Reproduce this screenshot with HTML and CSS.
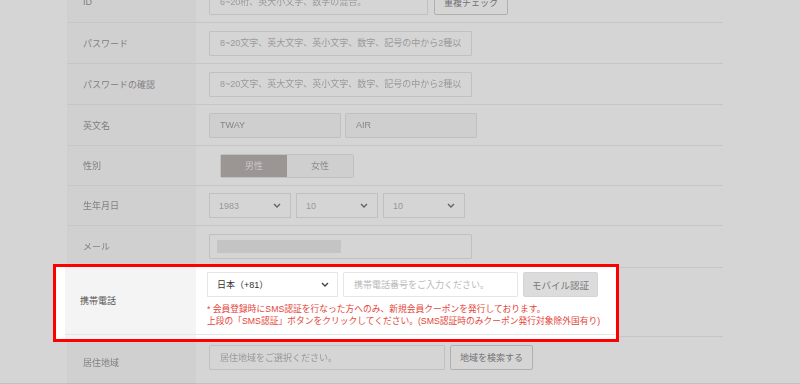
FILE: index.html
```html
<!DOCTYPE html>
<html lang="ja">
<head>
<meta charset="utf-8">
<title>会員登録</title>
<link rel="stylesheet" href="styles.css">
</head>
<body>
<div class="page">
  <div class="form">
    <div class="row">
      <div class="label">ID</div>
      <div class="field">
        <input class="text w-id" placeholder="6~20桁、英大小文字、数字の混合。">
        <button class="btn w-check">重複チェック</button>
      </div>
    </div>
    <div class="row">
      <div class="label">パスワード</div>
      <div class="field">
        <input class="text w-long" type="password" placeholder="8~20文字、英大文字、英小文字、数字、記号の中から2種以上">
      </div>
    </div>
    <div class="row">
      <div class="label">パスワードの確認</div>
      <div class="field">
        <input class="text w-long" type="password" placeholder="8~20文字、英大文字、英小文字、数字、記号の中から2種以上">
      </div>
    </div>
    <div class="row">
      <div class="label">英文名</div>
      <div class="field gap4">
        <input class="text filled w-name" value="TWAY" readonly>
        <input class="text filled w-name" value="AIR" readonly>
      </div>
    </div>
    <div class="row short">
      <div class="label">性別</div>
      <div class="field">
        <div class="toggle">
          <span class="on">男性</span>
          <span>女性</span>
        </div>
      </div>
    </div>
    <div class="row short">
      <div class="label">生年月日</div>
      <div class="field">
        <div class="select w-date"><span>1983</span><svg width="8" height="5" viewBox="0 0 8 5"><polyline points="1,1 4,4 7,1" fill="none" stroke="#777" stroke-width="1.4"/></svg></div>
        <div class="select w-date"><span>10</span><svg width="8" height="5" viewBox="0 0 8 5"><polyline points="1,1 4,4 7,1" fill="none" stroke="#777" stroke-width="1.4"/></svg></div>
        <div class="select w-date"><span>10</span><svg width="8" height="5" viewBox="0 0 8 5"><polyline points="1,1 4,4 7,1" fill="none" stroke="#777" stroke-width="1.4"/></svg></div>
      </div>
    </div>
    <div class="row mail">
      <div class="label">メール</div>
      <div class="field">
        <div class="text w-long masked"><span class="mask"></span></div>
      </div>
    </div>
    <!-- covered by the spotlight -->
    <div class="row phone">
      <div class="label"></div>
      <div class="field"></div>
    </div>
    <div class="row area">
      <div class="label">居住地域</div>
      <div class="field">
        <input class="text w-area" placeholder="居住地域をご選択ください。" readonly>
        <button class="btn w-search">地域を検索する</button>
      </div>
    </div>
  </div>

  <div class="dim"></div>

  <!-- highlighted row, lifted above the dim layer -->
  <div class="spotlight">
    <div class="spot-row">
      <div class="spot-label">携帯電話</div>
      <div class="spot-field">
        <div class="phone-line">
          <div class="select w-country"><span>日本（+81）</span><svg width="8" height="5" viewBox="0 0 8 5"><polyline points="1,1 4,4 7,1" fill="none" stroke="#444" stroke-width="1.4"/></svg></div>
          <input class="text w-phone" placeholder="携帯電話番号をご入力ください。">
          <button class="btn-mobile">モバイル認証</button>
        </div>
        <div class="notes">
          <p>* 会員登録時にSMS認証を行なった方へのみ、新規会員クーポンを発行しております。</p>
          <p>上段の「SMS認証」ボタンをクリックしてください。(SMS認証時のみクーポン発行対象除外国有り)</p>
        </div>
      </div>
    </div>
  </div>
</div>
</body>
</html>
```

FILE: styles.css
```css
body {
    margin: 0;
    background-color: #fff;
    font-family: "Liberation Sans", "Noto Sans CJK JP", sans-serif;
}

.page {
    position: relative;
    width: 800px;
    height: 384px;
    overflow: hidden;
}

.form {
    width: 656px;
    margin: -18px 0 0 67px;
    filter: blur(0.35px);
}

.row {
    display: grid;
    grid-template-columns: 129px 1fr;
    height: 41px;
    border-bottom: 1px solid #eee;
    box-sizing: border-box;
}

.row.short {
    height: 40px;
}

.row.mail {
    height: 42px;
}

.row.phone {
    height: 69px;
}

.row.area {
    height: 60px;
}

.label {
    display: flex;
    align-items: center;
    padding-left: 16px;
    background-color: #f9f9f9;
    font-size: 9px;
    color: #9a9a9a;
}

.row.area .label {
    align-items: flex-start;
    padding-top: 19px;
}

.field {
    display: flex;
    align-items: center;
    gap: 5px;
    padding-left: 13px;
}

.row.area .field {
    align-items: flex-start;
    padding-top: 8px;
}

.field.gap4 {
    gap: 4px;
}

.text {
    height: 25px;
    box-sizing: border-box;
    border: 1px solid #e6e6e6;
    border-radius: 1px;
    background-color: #fff;
    padding: 0 10px;
    font-family: inherit;
    font-size: 9px;
    color: #a0a0a0;
    outline: none;
}

.text::placeholder {
    color: #b8b8b8;
}

.text.filled {
    background-color: #f8f8f8;
}

.w-id { width: 219px; }
.w-long { width: 263px; }
.w-name { width: 132px; }
.w-area { width: 236px; }
.w-phone { width: 175px; }

.masked {
    display: flex;
    align-items: center;
    padding: 0 7px;
}

.mask {
    width: 124px;
    height: 13px;
    background-color: #ebebeb;
}

.btn {
    height: 25px;
    box-sizing: border-box;
    border: 1px solid #d2d2d2;
    border-radius: 2px;
    background-color: #fff;
    font-family: inherit;
    font-size: 9px;
    color: #888;
    padding: 0;
}

.w-check { width: 74px; margin-left: 1px; }
.w-search { width: 83px; }

.toggle {
    display: flex;
    margin-left: 11px;
    border: 1px solid #e6e6e6;
    border-radius: 2px;
}

.toggle span {
    width: 66px;
    height: 22px;
    display: flex;
    align-items: center;
    justify-content: center;
    font-size: 9px;
    color: #aaa;
    background-color: #f8f8f8;
}

.toggle span.on {
    background-color: #b9b3b0;
    color: #eee;
}

.select {
    height: 25px;
    box-sizing: border-box;
    border: 1px solid #e6e6e6;
    background-color: #fff;
    display: flex;
    align-items: center;
    justify-content: space-between;
    padding: 0 9px 0 9px;
    font-size: 9px;
    color: #b5b5b5;
}

.w-date { width: 82px; }

.dim {
    position: absolute;
    inset: 0;
    background-color: rgba(8, 2, 5, 0.165);
    border-bottom: 1px solid rgba(0, 0, 0, 0.1);
}

.spotlight {
    position: absolute;
    left: 53px;
    top: 264px;
    width: 566px;
    height: 78px;
    box-sizing: border-box;
    border: 3px solid #f00;
    background: linear-gradient(90deg, #fff 9px, #f4f4f4 9px, #f4f4f4 140px, #fff 140px);
}

.spot-row {
    display: grid;
    grid-template-columns: 131px 1fr;
    width: 550px;
    height: 68px;
    box-sizing: border-box;
    margin-left: 9px;
    border-bottom: 1px solid #e6e6e6;
}

.spot-label {
    display: flex;
    align-items: center;
    padding: 0 0 0 15px;
    font-size: 9px;
    color: #555;
}

.spot-field {
    padding: 5px 0 0 11px;
    background-color: #fff;
}

.phone-line {
    display: flex;
    gap: 5px;
}

.w-country {
    width: 131px;
    color: #333;
    padding-right: 8px;
}

.btn-mobile {
    width: 75px;
    height: 25px;
    box-sizing: border-box;
    border: 1px solid #d4d4d4;
    border-radius: 2px;
    background-color: #dcdcdc;
    font-family: inherit;
    font-size: 9.5px;
    color: #777;
    padding: 0;
}

.notes {
    margin-top: 6px;
    font-size: 8.75px;
    line-height: 12px;
    color: #e4453a;
}

.notes p {
    margin: 0;
    white-space: nowrap;
}
```
